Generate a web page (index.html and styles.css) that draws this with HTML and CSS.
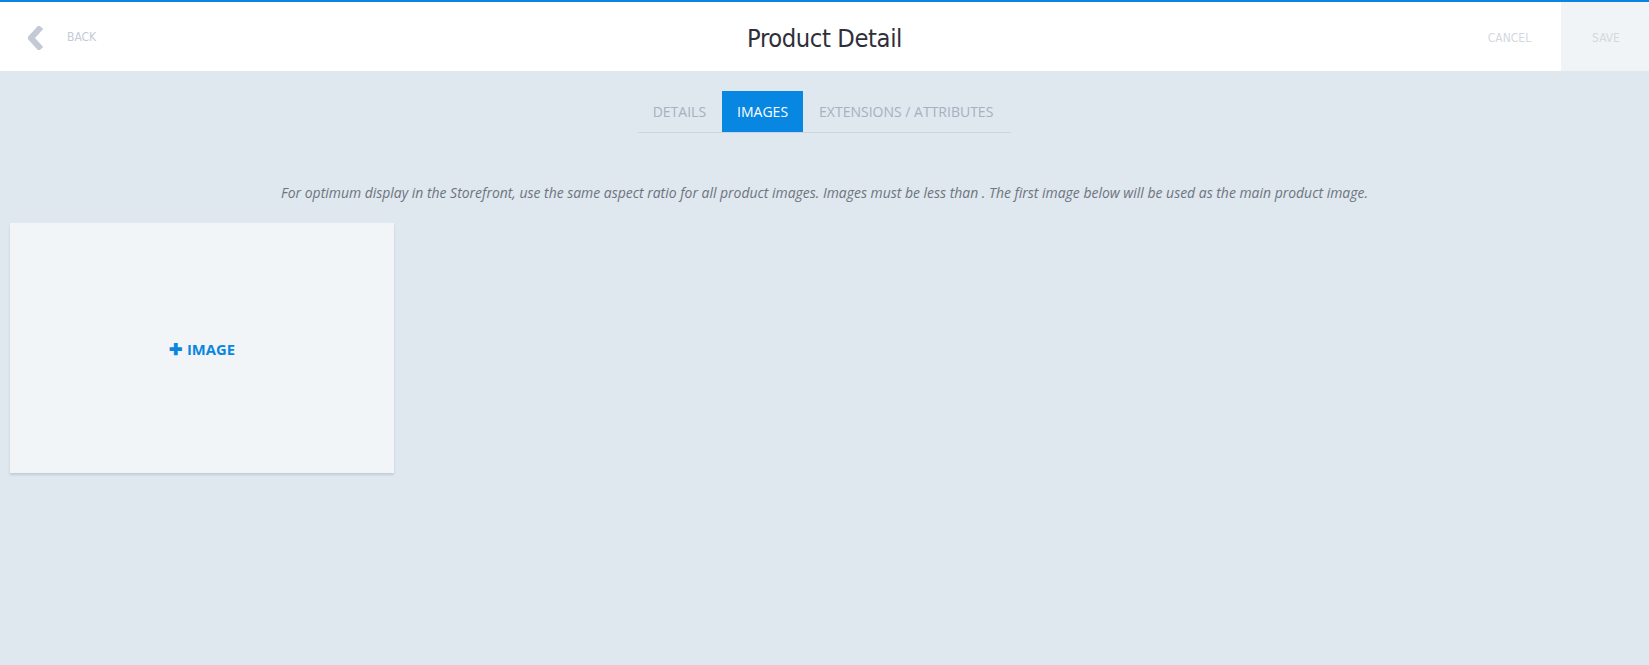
FILE: index.html
```html
<!DOCTYPE html>
<html>
<head>
<meta charset="utf-8">
<link rel="stylesheet" href="styles.css">
</head>
<body>
<header class="topbar">
  <div class="topbar-left">
    <a class="back">
      <svg class="back-icon" width="18" height="24" viewBox="0 0 18 24"><path d="M13 1 L3 12 L13 23" fill="none" stroke="#c3cad6" stroke-width="6" stroke-linejoin="miter"/></svg>
      <span class="back-label">BACK</span>
    </a>
  </div>
  <h1 class="title">Product Detail</h1>
  <div class="topbar-right">
    <button class="btn-cancel">CANCEL</button>
    <button class="btn-save">SAVE</button>
  </div>
</header>
<main class="content">
  <nav class="tabs">
    <div class="tab">DETAILS</div>
    <div class="tab tab-active">IMAGES</div>
    <div class="tab">EXTENSIONS / ATTRIBUTES</div>
  </nav>
  <p class="hint">For optimum display in the Storefront, use the same aspect ratio for all product images. Images must be less than . The first image below will be used as the main product image.</p>
  <div class="grid">
    <div class="add-card">
      <span class="add-label"><span class="plus">✚</span>IMAGE</span>
    </div>
  </div>
</main>
</body>
</html>
```
FILE: styles.css
```css
html, body {
  margin: 0;
  padding: 0;
}
body {
  background: #dfe7ef;
  font-family: "Open Sans", "Liberation Sans", sans-serif;
  width: 1649px;
  height: 665px;
  overflow: hidden;
}
.topbar {
  box-sizing: border-box;
  height: 71px;
  border-top: 2px solid #0a84e0;
  background: #ffffff;
  display: grid;
  grid-template-columns: 1fr auto 1fr;
  align-items: stretch;
}
.topbar-left {
  display: flex;
  align-items: center;
  padding-left: 28px;
}
.back {
  display: flex;
  align-items: center;
  cursor: pointer;
}
.back-icon {
  display: block;
  margin-top: 3px;
}
.back-label {
  margin-left: 21px;
  font-family: "DejaVu Sans Condensed", "Roboto", sans-serif;
  font-size: 12px;
  color: #c4cad6;
}
.title {
  margin: 0;
  align-self: center;
  font-family: "DejaVu Sans Condensed", "Roboto", sans-serif;
  font-weight: 400;
  font-size: 25.3px;
  color: #2f2f3a;
  letter-spacing: -0.4px;
  padding-top: 4px;
}
.topbar-right {
  display: flex;
  justify-content: flex-end;
  align-items: stretch;
}
.btn-cancel, .btn-save {
  border: 0;
  font-family: "DejaVu Sans Condensed", "Roboto", sans-serif;
  font-size: 12px;
  color: #d3d8e0;
  background: transparent;
  padding: 0;
  padding-top: 2px;
}
.btn-cancel {
  width: 98px;
  padding-right: 5px;
  background: #ffffff;
}
.btn-save {
  width: 88px;
  background: #f1f4f7;
  padding-left: 2px;
}
.content {
  display: flex;
  flex-direction: column;
  align-items: center;
}
.tabs {
  margin-top: 20px;
  display: flex;
  border-bottom: 1px solid #cdd6e0;
  padding: 0 3px 0 0;
}
.tab {
  height: 41px;
  display: flex;
  align-items: center;
  padding: 0 15px;
  font-size: 14px;
  color: #a6b0bf;
}
.tab-active {
  background: #0787e1;
  color: #ffffff;
  margin: 0 1px 0 1px;
}
.hint {
  margin: 50px 0 0 0;
  font-size: 13.95px;
  font-style: italic;
  color: #6d747e;
  text-align: center;
}
.grid {
  align-self: stretch;
  display: flex;
  padding: 21px 10px 0 10px;
}
.add-card {
  width: 384px;
  height: 250px;
  background: #f2f5f8;
  box-shadow: 0 2px 2px rgba(160, 175, 195, 0.45);
  display: flex;
  align-items: center;
  justify-content: center;
}
.add-label {
  font-size: 14.8px;
  font-weight: 700;
  color: #0a86e0;
  display: flex;
  align-items: center;
  margin-top: 1px;
}
.plus {
  font-size: 16px;
  margin-right: 5px;
}
```
